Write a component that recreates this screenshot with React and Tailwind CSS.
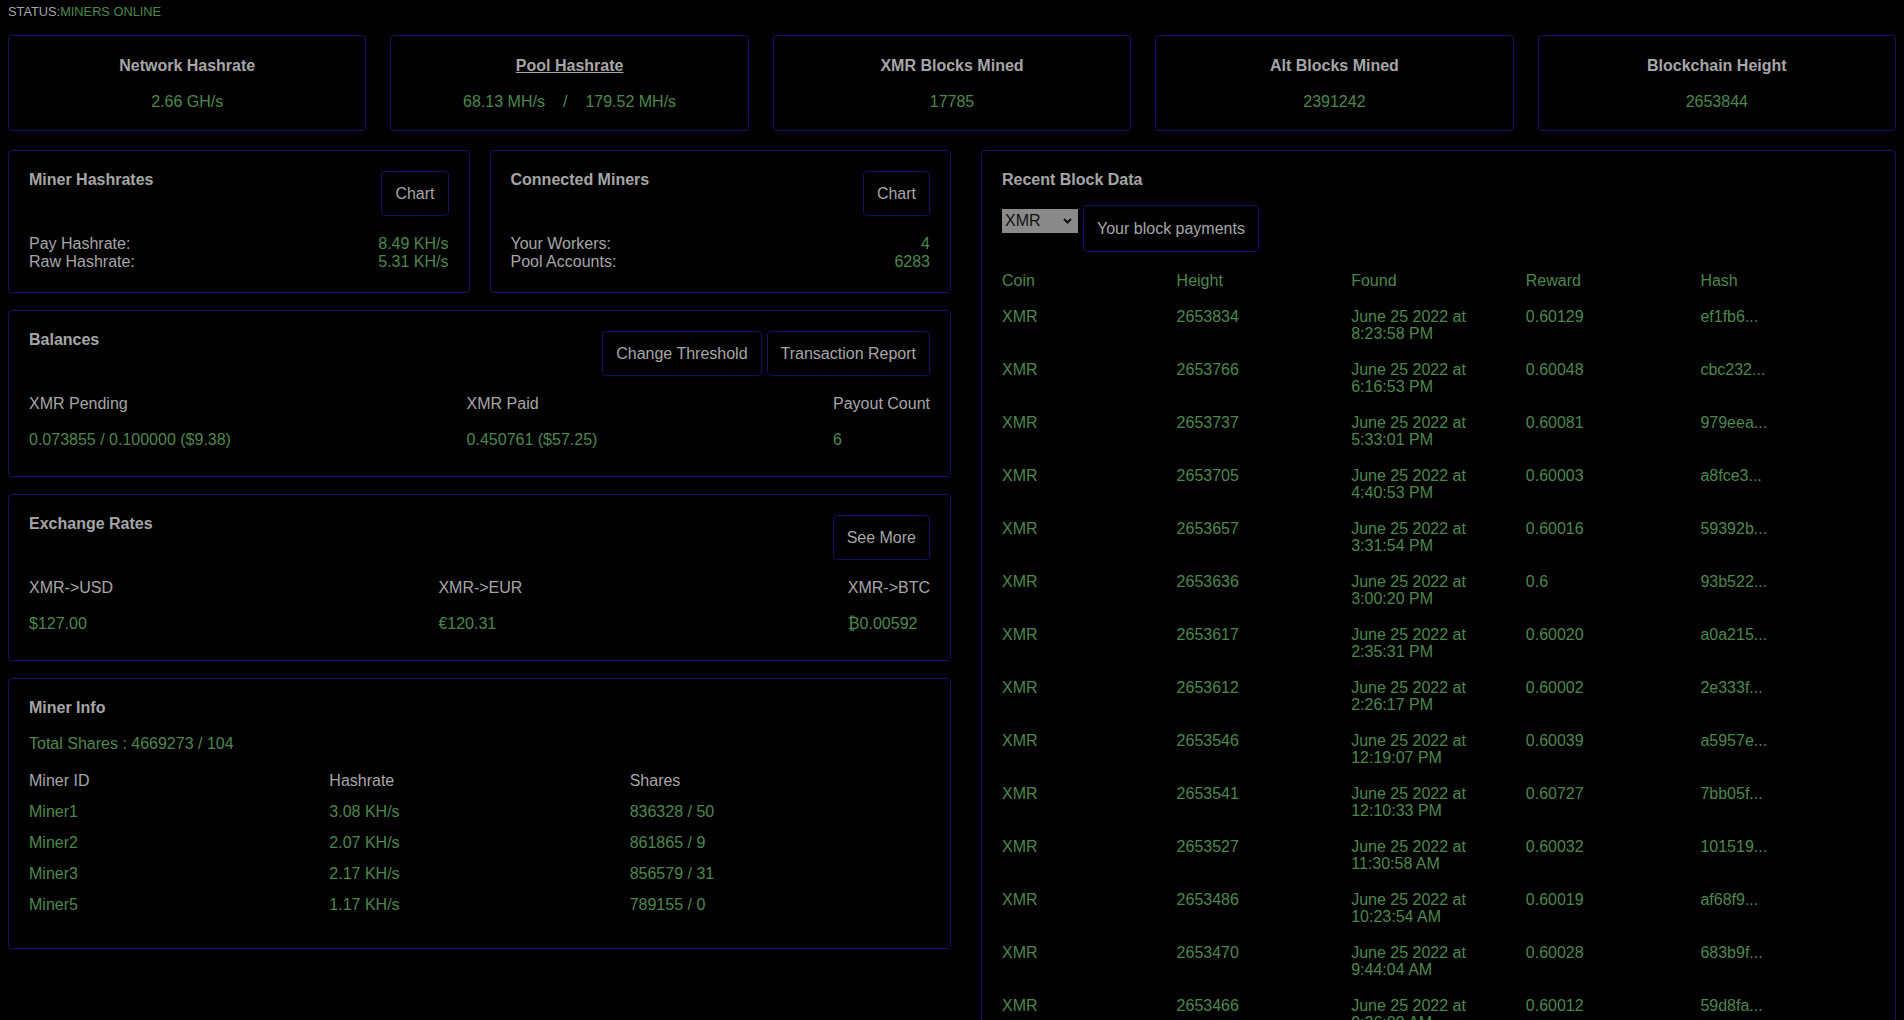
import React from "react";

// pool dashboard: stat tiles on top, miner cards on the left, recent blocks on the right
const green = "text-[#4c884c]";

const topStats = [
    { title: "Network Hashrate", value: "2.66 GH/s" },
    { title: "Pool Hashrate", pool: ["68.13 MH/s", "179.52 MH/s"], link: true },
    { title: "XMR Blocks Mined", value: "17785" },
    { title: "Alt Blocks Mined", value: "2391242" },
    { title: "Blockchain Height", value: "2653844" },
];

const miners = [
    ["Miner1", "3.08 KH/s", "836328 / 50"],
    ["Miner2", "2.07 KH/s", "861865 / 9"],
    ["Miner3", "2.17 KH/s", "856579 / 31"],
    ["Miner5", "1.17 KH/s", "789155 / 0"],
];

const blocks = [
    ["2653834", "8:23:58 PM", "0.60129", "ef1fb6..."],
    ["2653766", "6:16:53 PM", "0.60048", "cbc232..."],
    ["2653737", "5:33:01 PM", "0.60081", "979eea..."],
    ["2653705", "4:40:53 PM", "0.60003", "a8fce3..."],
    ["2653657", "3:31:54 PM", "0.60016", "59392b..."],
    ["2653636", "3:00:20 PM", "0.6", "93b522..."],
    ["2653617", "2:35:31 PM", "0.60020", "a0a215..."],
    ["2653612", "2:26:17 PM", "0.60002", "2e333f..."],
    ["2653546", "12:19:07 PM", "0.60039", "a5957e..."],
    ["2653541", "12:10:33 PM", "0.60727", "7bb05f..."],
    ["2653527", "11:30:58 AM", "0.60032", "101519..."],
    ["2653486", "10:23:54 AM", "0.60019", "af68f9..."],
    ["2653470", "9:44:04 AM", "0.60028", "683b9f..."],
    ["2653466", "9:26:09 AM", "0.60012", "59d8fa..."],
    ["2653433", "8:51:12 AM", "0.60010", "c3a0e1..."],
];

function Button({ children, className = "" }) {
    return (
        <button className={`h-[45px] px-[13px] border border-[#121264] rounded-[4px] bg-black text-[#a6a6a6] text-base leading-[18px] whitespace-nowrap ${className}`}>
            {children}
        </button>
    );
}

function Card({ children, className = "" }) {
    return (
        <div className={`border border-[#121264] rounded-[4px] bg-black ${className}`}>{children}</div>
    );
}

function StatCard({ title, value, pool, link }) {
    return (
        <Card className="flex-1 h-[96px] flex flex-col items-center pt-[21px] gap-[18px]">
            <h3 className={`font-bold text-base leading-[18px] ${link ? "underline" : ""}`}>{title}</h3>
            {pool ? (
                <p className={`${green} flex`}>
                    <span>{pool[0]}</span>
                    <span className="mx-[18px]">/</span>
                    <span>{pool[1]}</span>
                </p>
            ) : (
                <p className={green}>{value}</p>
            )}
        </Card>
    );
}

function CountCard({ title, rows }) {
    return (
        <Card className="flex-1 px-[20px] pt-[20px] pb-[21px]">
            <div className="flex justify-between items-start">
                <h3 className="font-bold">{title}</h3>
                <Button>Chart</Button>
            </div>
            <div className="mt-[19px]">
                {rows.map(([label, val]) => (
                    <div key={label} className="flex justify-between">
                        <span>{label}</span>
                        <span className={green}>{val}</span>
                    </div>
                ))}
            </div>
        </Card>
    );
}

function ColumnsCard({ title, buttons, cols }) {
    return (
        <Card className="px-[20px] pt-[20px] pb-[27px]">
            <div className="flex justify-between items-start">
                <h3 className="font-bold">{title}</h3>
                <div className="flex gap-[5px]">
                    {buttons.map((b) => <Button key={b}>{b}</Button>)}
                </div>
            </div>
            <div className="mt-[19px] flex justify-between">
                {cols.map(([label, val]) => (
                    <div key={label}>
                        <p>{label}</p>
                        <p className={`${green} mt-[18px]`}>{val}</p>
                    </div>
                ))}
            </div>
        </Card>
    );
}

export default function App() {
    return (
        <div className="min-h-screen bg-black px-2 pb-10 font-['Liberation_Sans',Arial,sans-serif] text-base leading-[18px] text-[#a6a6a6]">
            <div className="h-[35px] pt-[4px] text-[12.8px] leading-[15px]">
                STATUS:<span className={green}>MINERS ONLINE</span>
            </div>

            <div className="flex gap-6">
                {topStats.map((s) => <StatCard key={s.title} {...s} />)}
            </div>

            <div className="mt-[19px] flex items-start gap-[30px]">
                {/* left column */}
                <div className="w-[943px] flex flex-col gap-[17px]">
                    <div className="flex gap-5">
                        <CountCard title="Miner Hashrates" rows={[["Pay Hashrate:", "8.49 KH/s"], ["Raw Hashrate:", "5.31 KH/s"]]} />
                        <CountCard title="Connected Miners" rows={[["Your Workers:", "4"], ["Pool Accounts:", "6283"]]} />
                    </div>

                    <ColumnsCard
                        title="Balances"
                        buttons={["Change Threshold", "Transaction Report"]}
                        cols={[
                            ["XMR Pending", "0.073855 / 0.100000 ($9.38)"],
                            ["XMR Paid", "0.450761 ($57.25)"],
                            ["Payout Count", "6"],
                        ]}
                    />

                    <ColumnsCard
                        title="Exchange Rates"
                        buttons={["See More"]}
                        cols={[
                            ["XMR->USD", "$127.00"],
                            ["XMR->EUR", "€120.31"],
                            ["XMR->BTC", "₿0.00592"],
                        ]}
                    />

                    <Card className="px-[20px] pt-[20px] pb-[28px]">
                        <h3 className="font-bold">Miner Info</h3>
                        <p className={`${green} mt-[18px]`}>Total Shares : 4669273 / 104</p>
                        <div className="mt-[12px]">
                            <div className="grid grid-cols-3 h-[31px] items-center">
                                <span>Miner ID</span>
                                <span>Hashrate</span>
                                <span>Shares</span>
                            </div>
                            {miners.map((m) => (
                                <div key={m[0]} className={`grid grid-cols-3 h-[31px] items-center ${green}`}>
                                    {m.map((c, i) => <span key={i}>{c}</span>)}
                                </div>
                            ))}
                        </div>
                    </Card>
                </div>

                {/* right column */}
                <Card className="flex-1 px-[20px] pt-[20px] pb-[20px]">
                    <h3 className="font-bold">Recent Block Data</h3>
                    <div className="mt-[16px] flex items-start gap-[5px]">
                        <div className="relative mt-[4px]">
                            <select className="appearance-none w-[76px] h-[24px] bg-[#8a8a8a] text-[#111] pl-[3px] text-base leading-[18px] outline-none">
                                <option>XMR</option>
                            </select>
                            <svg className="absolute right-[6px] top-[9px] pointer-events-none" width="9" height="6" viewBox="0 0 9 6">
                                <path d="M1 1l3.5 3.5L8 1" fill="none" stroke="#111" strokeWidth="2" />
                            </svg>
                        </div>
                        <Button className="h-[47px] px-[12px]">Your block payments</Button>
                    </div>

                    <div className={`mt-[11px] ${green} leading-[17.5px]`}>
                        <div className="grid grid-cols-5 py-[9px]">
                            <span>Coin</span>
                            <span>Height</span>
                            <span>Found</span>
                            <span>Reward</span>
                            <span>Hash</span>
                        </div>
                        {blocks.map(([height, time, reward, hash]) => (
                            <div key={height} className="grid grid-cols-5 py-[9px]">
                                <span>XMR</span>
                                <span>{height}</span>
                                <span>
                                    <span className="block">June 25 2022 at</span>
                                    <span className="block">{time}</span>
                                </span>
                                <span>{reward}</span>
                                <span>{hash}</span>
                            </div>
                        ))}
                    </div>
                </Card>
            </div>
        </div>
    );
}
